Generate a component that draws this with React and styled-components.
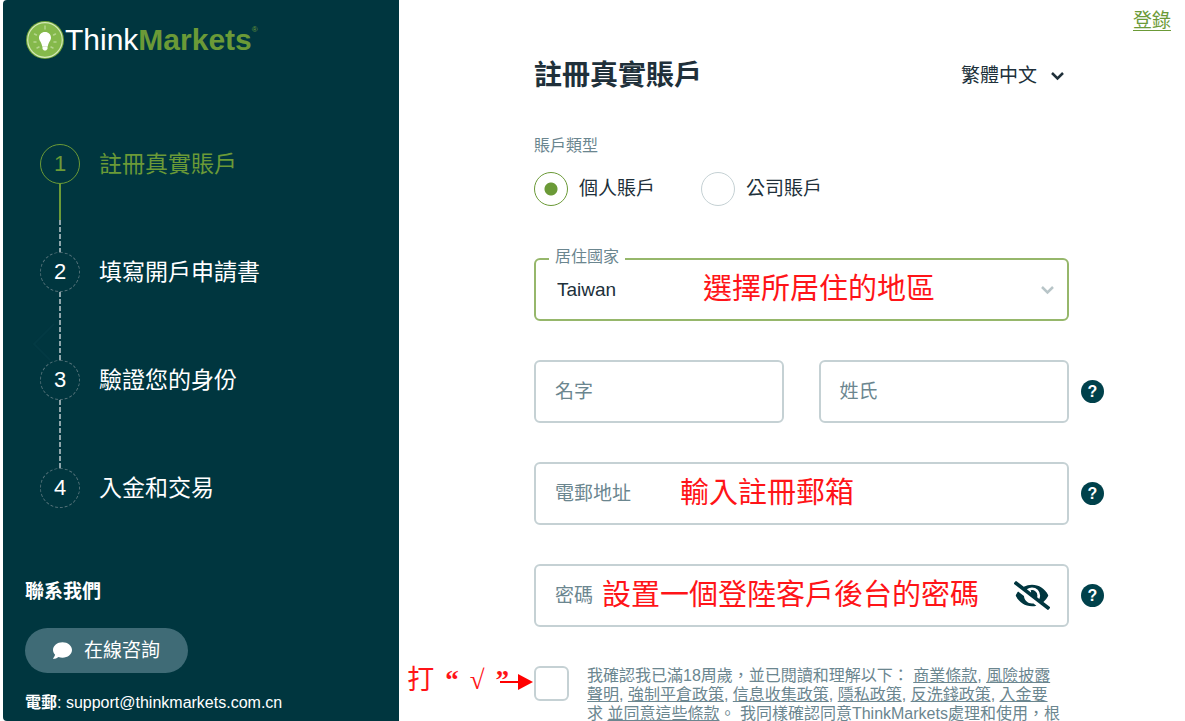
import React from "react";
import styled, { createGlobalStyle, css } from "styled-components";
import { FaComment, FaEyeSlash } from "react-icons/fa";

const sans = `"Liberation Sans", "Noto Sans CJK TC", sans-serif`;
const ink = "#20303a";
const muted = "#6b868f";
const green = "#6b9a37";
const navy = "#00363f";
const line = "#c5d1d4";

const Global = createGlobalStyle`
  *, *::before, *::after { box-sizing: border-box; }
  body { margin: 0; background: #fff; color: ${ink}; font-family: ${sans}; font-size: 19px; line-height: 24px; }
  button, input, select { font: inherit; color: inherit; margin: 0; padding: 0; background: none; border: 0; outline: 0; }
  button { cursor: pointer; }
  h1, h2, p, ol { margin: 0; padding: 0; }
`;

const Page = styled.div`
  display: flex;
  height: 100vh;
  padding-left: 3px;
  overflow: hidden;
`;

const Sidebar = styled.aside`
  flex: 0 0 396px;
  display: flex;
  flex-direction: column;
  padding: 20px 22px 0;
  background: ${navy};
  color: #fff;
  border-radius: 4px 0 0 4px;
  position: relative;
`;

const Watermark = styled.svg`
  position: absolute;
  left: 24px;
  top: 322px;
  width: 30px;
  height: 40px;
`;

const Logo = styled.a`
  display: flex;
  align-items: center;
  height: 40px;
  color: #fff;
  text-decoration: none;
  font-size: 30px;
  line-height: 40px;
  svg { width: 40px; height: 40px; }
  b { color: ${green}; }
  sup { align-self: flex-start; color: ${green}; font-size: 8px; line-height: 20px; }
`;

const Steps = styled.ol`
  list-style: none;
  margin: 84px 0 0 14px;
`;

const Step = styled.li`
  display: grid;
  grid-template-columns: 42px 1fr;
  grid-template-rows: 40px 68px;
  column-gap: 18px;
  justify-items: center;
  align-items: center;
  font-size: 23px;
  line-height: 40px;
  color: ${(p) => (p.$active ? green : "#fff")};
  &:last-child { grid-template-rows: 40px; }
`;

const StepNumber = styled.span`
  width: 40px;
  height: 40px;
  border-radius: 50%;
  border: 1px ${(p) => (p.$active ? `solid ${green}` : "dashed #527178")};
  font-size: 22px;
  line-height: 38px;
  text-align: center;
`;

const StepName = styled.span`
  justify-self: start;
`;

const Connector = styled.span`
  display: flex;
  flex-direction: column;
  width: 2px;
  height: 68px;
  &::before {
    content: "";
    flex: 0 0 ${(p) => (p.$active ? 36 : 0)}px;
    background: ${green};
  }
  &::after {
    content: "";
    flex: 1;
    background: repeating-linear-gradient(#8fa6ab 0 5px, transparent 5px 7px);
  }
`;

const Contact = styled.section`
  display: flex;
  flex-direction: column;
  align-items: flex-start;
  margin-top: 71px;
  h2 { font-size: 19px; line-height: 26px; }
  p { font-size: 16px; line-height: 24px; white-space: nowrap; }
  a { color: inherit; text-decoration: none; }
`;

const ChatButton = styled.button`
  display: flex;
  align-items: center;
  gap: 12px;
  height: 45px;
  margin: 23px 0 18px;
  padding: 0 28px;
  border-radius: 23px;
  background: #3f6b76;
  color: #fff;
  svg { width: 19px; height: 19px; }
`;

const Main = styled.main`
  flex: 1;
  min-width: 0;
  display: flex;
  flex-direction: column;
  padding: 9px 81px 0 135px;
`;

const LoginLink = styled.a`
  align-self: flex-end;
  margin-right: -67px;
  color: ${green};
  text-underline-offset: 3px;
`;

const Heading = styled.header`
  display: flex;
  justify-content: space-between;
  align-items: center;
  margin: 23px 35px 0 0;
  h1 { font-size: 28px; line-height: 40px; }
`;

const LanguageButton = styled.button`
  display: flex;
  align-items: center;
  gap: 13px;
  padding-right: 4px;
  svg { width: 15px; height: 10px; }
`;

const AccountType = styled.div`
  margin-top: 38px;
`;

const GroupName = styled.div`
  color: ${muted};
  font-size: 16px;
  line-height: 24px;
`;

const Radios = styled.div`
  display: flex;
  gap: 46px;
  margin-top: 14px;
`;

const RadioLabel = styled.label`
  display: flex;
  align-items: center;
  gap: 11px;
`;

const Radio = styled.input`
  appearance: none;
  width: 34px;
  height: 34px;
  border: 1px solid ${line};
  border-radius: 50%;
  &:checked {
    border-color: ${green};
    background: radial-gradient(circle, ${green} 0 6px, transparent 7px);
  }
`;

const Form = styled.form`
  display: flex;
  flex-direction: column;
  gap: 39px;
  margin-top: 52px;
`;

const Row = styled.div`
  display: grid;
  grid-template-columns: ${(p) => (p.$two ? "1fr 1fr" : "1fr")} 23px;
  align-items: center;
  column-gap: 12px;
  ${(p) => p.$two && css`
    > :first-child { margin-right: 12px; }
    > :nth-child(2) { margin-left: 11px; }
  `}
`;

const Field = styled.div`
  position: relative;
  display: flex;
  align-items: center;
  gap: 8px;
  min-width: 0;
  height: 63px;
  padding: 0 19px;
  border: 2px solid ${(p) => (p.$active ? "#96b76b" : line)};
  border-radius: 6px;
  label { color: ${muted}; white-space: nowrap; }
  input { flex: 1; min-width: 0; height: 40px; }
`;

const FloatingLabel = styled.label`
  position: absolute;
  left: 13px;
  top: -15px;
  padding: 0 6px;
  background: #fff;
  font-size: 16px;
  line-height: 24px;
`;

const Select = styled.select`
  appearance: none;
  flex: 1;
  height: 40px;
  padding-left: 2px;
`;

const FieldArrow = styled.svg`
  width: 15px;
  height: 10px;
  margin-right: -7px;
`;

const EyeButton = styled.button`
  margin-right: -2px;
  color: ${navy};
  svg { display: block; width: 36px; height: 29px; }
`;

const Help = styled.button`
  width: 23px;
  height: 23px;
  border-radius: 50%;
  background: #00414b;
  color: #fff;
  font-size: 16px;
  font-weight: bold;
  line-height: 23px;
  text-align: center;
`;

const Note = styled.span`
  position: absolute;
  left: ${(p) => p.$left}px;
  top: 9px;
  color: #ff1418;
  font-size: 29px;
  line-height: 40px;
  white-space: nowrap;
  pointer-events: none;
`;

const Consent = styled.div`
  position: relative;
  display: flex;
  align-items: flex-start;
  gap: 18px;
  margin-right: 35px;
`;

const Checkbox = styled.input`
  appearance: none;
  flex: 0 0 35px;
  height: 35px;
  && { border: 2px solid ${line}; border-radius: 6px; }
`;

const ConsentText = styled.label`
  color: ${muted};
  font-size: 16px;
  line-height: 19px;
  white-space: nowrap;
  a { color: inherit; }
`;

const TickNote = styled.span`
  position: absolute;
  right: 100%;
  top: -4px;
  display: flex;
  align-items: center;
  color: #ff1418;
  font-family: "Liberation Serif", "Noto Sans CJK TC", serif;
  font-size: 27px;
  line-height: 36px;
  white-space: nowrap;
  gap: 11px;
  svg { width: 34px; height: 16px; margin: 4px 0 0 -20px; }
`;

const Chevron = ({ color }) => (
  <path d="M2 2l5.500 5.500L13 2" fill="none" stroke={color} strokeWidth="2.500" />
);

const steps = ["註冊真實賬戶", "填寫開戶申請書", "驗證您的身份", "入金和交易"];

export default function App() {
  return (
    <Page>
      <Global />
      <Sidebar>
        <Watermark viewBox="0 0 30 40" aria-hidden="true">
          <path d="M27 2L7 22l16 16" fill="none" stroke="#033a43" strokeWidth="2" />
        </Watermark>
        <Logo href="#">
          <svg viewBox="0 0 40 40" aria-hidden="true">
            <circle cx="20" cy="20" r="19" fill="#6ea337" />
            <circle cx="20" cy="20" r="17.300" fill="#85b94b" stroke="#d3e8b8" strokeWidth="1.200" />
            <g stroke="#b4d58c" strokeWidth="1.500" strokeLinecap="round">
              <path d="M20 6v3M9.500 14l2 1M30.500 14l-2 1M9 22h2M29 22h2M12 28l2-1M28 28l-2-1" />
            </g>
            <path d="M20 12c-3.600 0-6 2.600-6 5.800 0 3 2.600 4.400 3.200 8.700h5.600c.6-4.300 3.200-5.700 3.200-8.700 0-3.200-2.400-5.800-6-5.800z" fill="#fff" />
            <path d="M17.500 26.500h5v2.600l-1.500 1.400h-2l-1.500-1.400z" fill="#fff" />
          </svg>
          <span>Think<b>Markets</b></span>
          <sup>®</sup>
        </Logo>
        <Steps>
          {steps.map((name, i) => (
            <Step key={name} $active={i === 0}>
              <StepNumber $active={i === 0}>{i + 1}</StepNumber>
              <StepName>{name}</StepName>
              {i < steps.length - 1 && <Connector $active={i === 0} />}
            </Step>
          ))}
        </Steps>
        <Contact>
          <h2>聯系我們</h2>
          <ChatButton type="button">
            <FaComment aria-hidden="true" />
            在線咨詢
          </ChatButton>
          <p><b>電郵</b>: <a href="mailto:support@thinkmarkets.com.cn">support@thinkmarkets.com.cn</a></p>
        </Contact>
      </Sidebar>
      <Main>
        <LoginLink href="#">登錄</LoginLink>
        <Heading>
          <h1>註冊真實賬戶</h1>
          <LanguageButton type="button">
            繁體中文
            <svg viewBox="0 0 15 10" aria-hidden="true"><Chevron color={ink} /></svg>
          </LanguageButton>
        </Heading>
        <AccountType role="radiogroup" aria-labelledby="account-type">
          <GroupName id="account-type">賬戶類型</GroupName>
          <Radios>
            <RadioLabel><Radio type="radio" name="type" defaultChecked />個人賬戶</RadioLabel>
            <RadioLabel><Radio type="radio" name="type" />公司賬戶</RadioLabel>
          </Radios>
        </AccountType>
        <Form>
          <Row>
            <Field $active>
              <FloatingLabel htmlFor="country">居住國家</FloatingLabel>
              <Select id="country"><option>Taiwan</option></Select>
              <FieldArrow viewBox="0 0 15 10" aria-hidden="true"><Chevron color="#b8c5c8" /></FieldArrow>
              <Note $left={167}>選擇所居住的地區</Note>
            </Field>
          </Row>
          <Row $two>
            <Field><label htmlFor="first">名字</label><input id="first" /></Field>
            <Field><label htmlFor="last">姓氏</label><input id="last" /></Field>
            <Help type="button">?</Help>
          </Row>
          <Row>
            <Field>
              <label htmlFor="email">電郵地址</label><input id="email" type="email" />
              <Note $left={144}>輸入註冊郵箱</Note>
            </Field>
            <Help type="button">?</Help>
          </Row>
          <Row>
            <Field>
              <label htmlFor="password">密碼</label><input id="password" type="password" />
              <EyeButton type="button" aria-label="顯示密碼"><FaEyeSlash /></EyeButton>
              <Note $left={66}>設置一個登陸客戶後台的密碼</Note>
            </Field>
            <Help type="button">?</Help>
          </Row>
          <Consent>
            <TickNote>
              <span>打</span><b>“</b><span>√</span><b>”</b>
              <svg viewBox="0 0 34 16" aria-hidden="true">
                <path d="M0 8h20" stroke="#f00" strokeWidth="2" />
                <path d="M18 0l15 8-15 8z" fill="#f00" />
              </svg>
            </TickNote>
            <Checkbox type="checkbox" id="consent" />
            <ConsentText htmlFor="consent">
              我確認我已滿18周歲，並已閱讀和理解以下： <a href="#">商業條款</a>, <a href="#">風險披露<br />聲明</a>, <a href="#">強制平倉政策</a>, <a href="#">信息收集政策</a>, <a href="#">隱私政策</a>, <a href="#">反洗錢政策</a>, <a href="#">入金要<br /></a>求 <a href="#">並同意這些條款</a>。 我同樣確認同意ThinkMarkets處理和使用，根
            </ConsentText>
          </Consent>
        </Form>
      </Main>
    </Page>
  );
}
